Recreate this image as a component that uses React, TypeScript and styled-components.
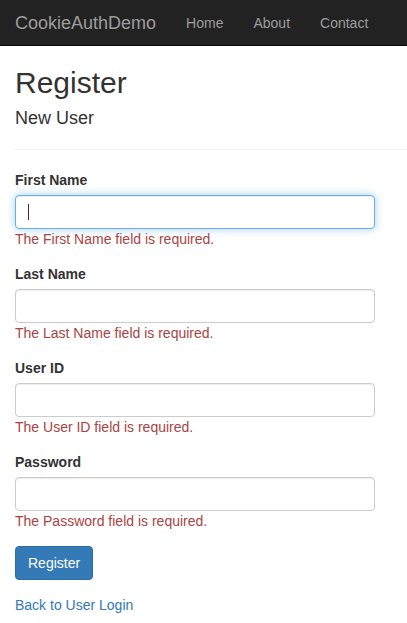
import React from 'react';
import styled, { createGlobalStyle } from 'styled-components';

const GlobalStyle = createGlobalStyle`
    html, body {
        margin: 0;
        padding: 0;
        background: #fff;
    }
    body {
        font-family: "Liberation Sans", Arial, Helvetica, sans-serif;
        font-size: 14px;
        line-height: 1.42857143;
        color: #333;
    }
    * {
        box-sizing: border-box;
    }
`;

const NavBar = styled.nav`
    display: flex;
    align-items: center;
    height: 46px;
    background-color: #222;
    border-bottom: 1px solid #080808;
    padding: 0 0 0 15px;
`;

const Brand = styled.a`
    font-size: 18px;
    line-height: 20px;
    color: #9d9d9d;
    text-decoration: none;
    padding-right: 15px;
`;

const NavLink = styled.a`
    font-size: 14px;
    line-height: 20px;
    color: #9d9d9d;
    text-decoration: none;
    padding: 0 15px;
`;

const Container = styled.div`
    padding-left: 15px;
`;

const Title = styled.h2`
    font-size: 30px;
    font-weight: 500;
    line-height: 1.1;
    margin: 20px 0 10px;
    color: #333;
`;

const SubTitle = styled.h4`
    font-size: 18px;
    font-weight: 500;
    line-height: 1.1;
    margin: 10px 0 10px;
    color: #333;
`;

const Rule = styled.hr`
    margin: 20px 0;
    border: 0;
    border-top: 1px solid #eee;
`;

const FormGroup = styled.div`
    margin-bottom: 15px;
`;

const Label = styled.label`
    display: block;
    font-weight: bold;
    margin-bottom: 5px;
    line-height: 20px;
`;

const Field = styled.div`
    position: relative;
    width: 360px;
`;

const Input = styled.input<{ $focused?: boolean }>`
    display: block;
    width: 360px;
    height: 34px;
    padding: 6px 12px;
    font-family: inherit;
    font-size: 14px;
    color: #555;
    background: #fff;
    border: 1px solid ${p => (p.$focused ? '#66afe9' : '#ccc')};
    border-radius: 4px;
    outline: 0;
    box-shadow: ${p =>
        p.$focused
            ? 'inset 0 1px 1px rgba(0,0,0,.075), 0 0 8px rgba(102,175,233,.6)'
            : 'inset 0 1px 1px rgba(0,0,0,.075)'};
    caret-color: transparent;
`;

const Caret = styled.span`
    position: absolute;
    left: 13px;
    top: 9px;
    width: 1px;
    height: 16px;
    background: #333;
`;

const ErrorText = styled.span`
    display: block;
    color: #a94442;
    line-height: 20px;
`;

const Button = styled.button`
    display: inline-block;
    height: 34px;
    padding: 6px 12px;
    font-family: inherit;
    font-size: 14px;
    line-height: 20px;
    color: #fff;
    background-color: #337ab7;
    border: 1px solid #2e6da4;
    border-radius: 4px;
    cursor: pointer;
`;

const BackLink = styled.a`
    display: block;
    margin-top: 15px;
    color: #337ab7;
    text-decoration: none;
    line-height: 20px;
`;

const fields = [
    { label: 'First Name', type: 'text' },
    { label: 'Last Name', type: 'text' },
    { label: 'User ID', type: 'text' },
    { label: 'Password', type: 'password' },
];

const App: React.FC = () => {
    return (
        <>
            <GlobalStyle />
            <NavBar>
                <Brand href="#">CookieAuthDemo</Brand>
                <NavLink href="#">Home</NavLink>
                <NavLink href="#">About</NavLink>
                <NavLink href="#">Contact</NavLink>
            </NavBar>
            <Container>
                <Title>Register</Title>
                <SubTitle>New User</SubTitle>
                <Rule />
                <form onSubmit={e => e.preventDefault()}>
                    {fields.map((f, i) => (
                        <FormGroup key={f.label}>
                            <Label>{f.label}</Label>
                            <Field>
                                <Input type={f.type} $focused={i === 0} />
                                {i === 0 && <Caret />}
                            </Field>
                            <ErrorText>The {f.label} field is required.</ErrorText>
                        </FormGroup>
                    ))}
                    <Button type="submit">Register</Button>
                </form>
                <BackLink href="#">Back to User Login</BackLink>
            </Container>
        </>
    );
};

export default App;
